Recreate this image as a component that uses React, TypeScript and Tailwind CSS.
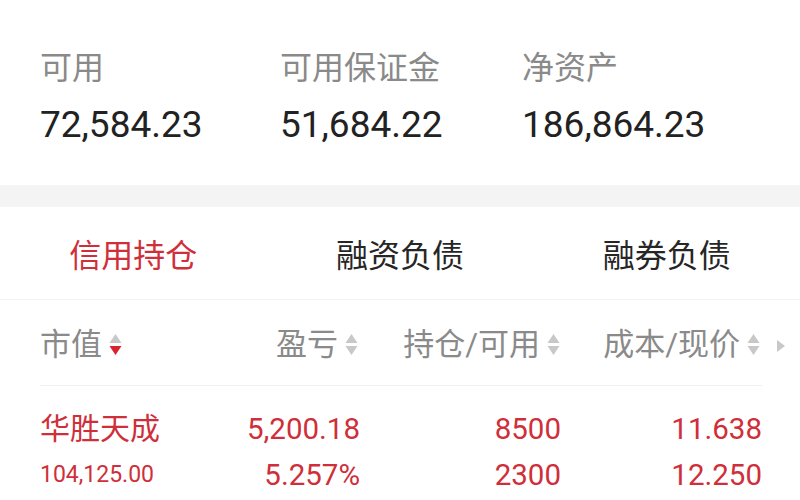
import React from "react";

const RED = "text-[#cf2f3a]";

function SortIcon({ down = false }: { down?: boolean }) {
  return (
    <svg width="13" height="24" viewBox="0 0 13 24" className="ml-[7px] shrink-0">
      <polygon points="6.5,1 12.5,10 0.5,10" fill="#c8c8c8" />
      <polygon points="0.5,13 12.5,13 6.5,22" fill={down ? "#d9232f" : "#c8c8c8"} />
    </svg>
  );
}

export default function App() {
  const font = { fontFamily: 'Roboto, "Noto Sans CJK SC", sans-serif' };
  return (
    <div className="w-[800px] h-[500px] overflow-hidden bg-white" style={font}>
      {/* summary */}
      <div className="pt-[50px] pb-[38px] pl-[40px] flex">
        <div className="w-[240px] flex flex-col">
          <div className="text-[32px] leading-[36px] text-[#8a8a8a]">可用</div>
          <div className="mt-[17px] text-[37px] leading-[44px] text-[#222]">72,584.23</div>
        </div>
        <div className="w-[242px] flex flex-col">
          <div className="text-[32px] leading-[36px] text-[#8a8a8a]">可用保证金</div>
          <div className="mt-[17px] text-[37px] leading-[44px] text-[#222]">51,684.22</div>
        </div>
        <div className="flex flex-col">
          <div className="text-[32px] leading-[36px] text-[#8a8a8a]">净资产</div>
          <div className="mt-[17px] text-[37px] leading-[44px] text-[#222]">186,864.23</div>
        </div>
      </div>
      <div className="h-[22px] bg-[#f4f4f4]" />
      {/* tabs */}
      <div className="h-[93px] pt-[29px] grid grid-cols-3 border-b border-[#f2f2f2]">
        <div className={`text-center text-[32px] leading-[40px] ${RED}`}>信用持仓</div>
        <div className="text-center text-[32px] leading-[40px] text-[#262626]">融资负债</div>
        <div className="text-center text-[32px] leading-[40px] text-[#262626]">融券负债</div>
      </div>
      {/* header */}
      <div className="relative pl-[40px] pr-[38px]">
        <div className="grid grid-cols-[120px_200px_201px_201px] pt-[25px] pb-[20px] border-b border-[#f0f0f0] text-[31px] leading-[40px] text-[#8a8a8a]">
          <div className="flex items-center whitespace-nowrap">
            市值
            <SortIcon down />
          </div>
          <div className="flex items-center justify-end pr-[2px] whitespace-nowrap">
            盈亏
            <SortIcon />
          </div>
          <div className="flex items-center justify-end pr-[1px] whitespace-nowrap">
            持仓/可用
            <SortIcon />
          </div>
          <div className="flex items-center justify-end pr-[2px] whitespace-nowrap">
            成本/现价
            <SortIcon />
          </div>
        </div>
        <svg width="10" height="14" viewBox="0 0 10 14" className="absolute right-[14px] top-[39px]">
          <polygon points="1,1 9,7 1,13" fill="#c8c8c8" />
        </svg>
        {/* data row */}
        <div className={`grid grid-cols-[120px_200px_201px_201px] pt-[25px] ${RED}`}>
          <div className="text-[30px] leading-[36px] whitespace-nowrap">华胜天成</div>
          <div className="text-[29.5px] leading-[36px] text-right">5,200.18</div>
          <div className="text-[29.5px] leading-[36px] text-right">8500</div>
          <div className="text-[29.5px] leading-[36px] text-right">11.638</div>
          <div className="mt-[12px] text-[23px] leading-[32px] whitespace-nowrap">104,125.00</div>
          <div className="mt-[12px] text-[29.5px] leading-[32px] text-right">5.257%</div>
          <div className="mt-[12px] text-[29.5px] leading-[32px] text-right">2300</div>
          <div className="mt-[12px] text-[29.5px] leading-[32px] text-right">12.250</div>
        </div>
      </div>
    </div>
  );
}
